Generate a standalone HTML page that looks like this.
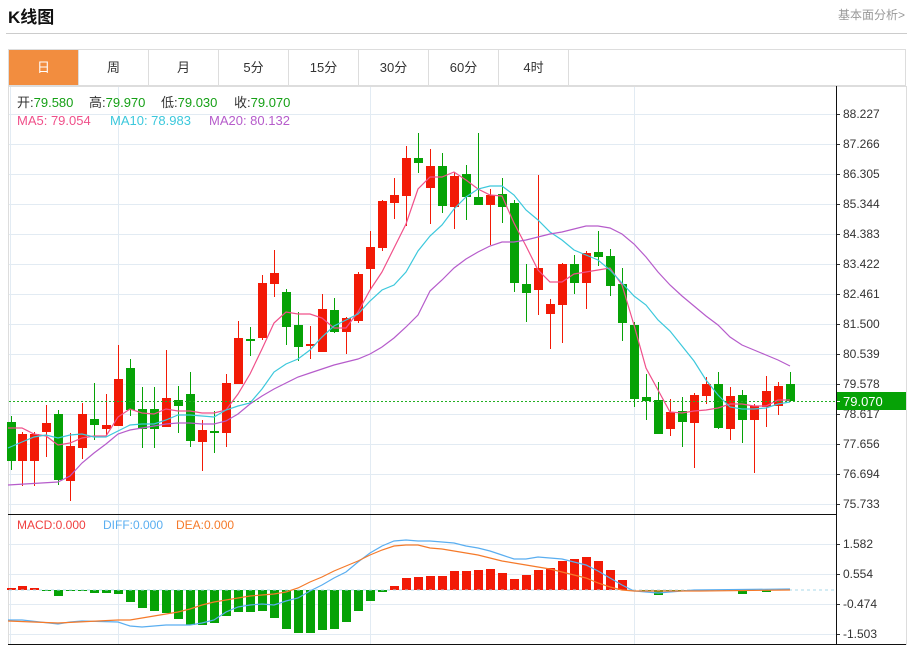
<!DOCTYPE html>
<html><head><meta charset="utf-8"><style>
*{margin:0;padding:0;box-sizing:border-box}
body{width:913px;height:645px;background:#fff;font-family:"Liberation Sans","Noto Sans CJK SC",sans-serif;overflow:hidden;position:relative}
.t{position:absolute;left:8px;top:3px;font-size:17px;font-weight:bold;color:#111}
.r{position:absolute;right:8px;top:6px;font-size:12px;color:#999}
.hl{position:absolute;left:6px;right:6px;top:33px;height:1px;background:#ccc}
.tabs{position:absolute;left:8px;top:49px;width:898px;height:37px;border:1px solid #ddd;display:flex}
.tabs div{width:70px;border-right:1px solid #ddd;text-align:center;line-height:35px;font-size:13px;color:#333}
.tabs div.a{background:#f28d3f;color:#fff}
svg{position:absolute;left:0;top:0}
</style></head><body>
<div class="t">K线图</div><div class="r">基本面分析&gt;</div><div class="hl"></div>
<div class="tabs"><div class="a">日</div><div>周</div><div>月</div><div>5分</div><div>15分</div><div>30分</div><div>60分</div><div>4时</div></div>
<svg id="s" width="913" height="645" style="top:0" xmlns="http://www.w3.org/2000/svg" font-family="Liberation Sans, Noto Sans CJK SC, sans-serif"></svg>
<script>
var s=document.getElementById('s'),h='';
h+='<rect x="8.5" y="86.5" width="898" height="558" fill="none" stroke="#ddd"/>';
var ys=[114,144,174,204,234,264,294,324,354,384,414,444,474,504],lb=['88.227','87.266','86.305','85.344','84.383','83.422','82.461','81.500','80.539','79.578','78.617','77.656','76.694','75.733'];
ys.forEach(function(y,i){h+='<line x1="9" x2="836" y1="'+(y+.5)+'" y2="'+(y+.5)+'" stroke="#e2ebf3"/><line x1="836" x2="840" y1="'+(y+.5)+'" y2="'+(y+.5)+'" stroke="#333"/><text x="843" y="'+(y+4)+'" font-size="12" fill="#333">'+lb[i]+'</text>'});
var my=[544,574,604,634],ml=['1.582','0.554','-0.474','-1.503'];
my.forEach(function(y,i){h+='<line x1="9" x2="836" y1="'+(y+.5)+'" y2="'+(y+.5)+'" stroke="#e2ebf3"/><line x1="836" x2="840" y1="'+(y+.5)+'" y2="'+(y+.5)+'" stroke="#333"/><text x="843" y="'+(y+4)+'" font-size="12" fill="#333">'+ml[i]+'</text>'});
[10.5,118.5,370.5,634.5].forEach(function(x){h+='<line x1="'+x+'" x2="'+x+'" y1="87" y2="644" stroke="#e2ebf3"/>'});
var C=[[11,422,461,416,470,'g'],[22,434,461,432,486,'r'],[34,434,461,432,486,'r'],[46,423,432,405,457,'r'],[58,414,480,410,485,'g'],[70,446,481,433,501,'r'],[82,414,448,403,459,'r'],[94,419,425,383,440,'g'],[106,425,429,394,435,'r'],[118,379,426,345,426,'r'],[130,368,410,359,416,'g'],[142,409,429,387,448,'g'],[154,409,429,387,448,'g'],[166,398,427,350,427,'r'],[178,400,406,386,433,'g'],[190,394,441,372,447,'g'],[202,430,442,420,471,'r'],[214,431,433,411,453,'g'],[226,383,433,374,447,'r'],[238,338,384,321,384,'r'],[250,339,341,327,356,'g'],[262,283,338,275,340,'r'],[274,273,284,250,297,'r'],[286,292,327,289,345,'g'],[298,325,347,312,361,'g'],[310,344,346,326,359,'r'],[322,309,352,294,352,'r'],[334,310,332,298,333,'g'],[346,318,332,317,354,'r'],[358,274,321,272,323,'r'],[370,247,269,231,290,'r'],[382,201,248,200,251,'r'],[394,195,203,178,219,'r'],[406,158,196,146,226,'r'],[418,158,163,133,173,'g'],[430,166,188,149,224,'r'],[442,166,206,153,213,'g'],[454,176,207,172,229,'r'],[466,174,197,165,220,'g'],[478,197,205,133,205,'g'],[490,195,205,189,245,'r'],[502,194,207,178,223,'g'],[514,203,283,200,292,'g'],[526,284,293,264,322,'g'],[538,268,290,175,315,'r'],[550,304,314,299,349,'r'],[562,264,305,263,343,'r'],[574,264,283,255,294,'g'],[586,253,283,251,309,'r'],[598,252,257,231,266,'g'],[610,256,286,249,296,'g'],[622,284,323,268,341,'g'],[634,325,399,322,407,'g'],[646,397,401,374,420,'g'],[658,400,434,382,434,'g'],[670,412,429,399,436,'r'],[682,411,422,397,447,'g'],[694,395,423,393,468,'r'],[706,384,396,377,404,'r'],[718,384,428,372,429,'g'],[730,396,429,387,440,'r'],[742,395,420,390,443,'g'],[754,406,420,404,473,'r'],[766,391,407,376,427,'r'],[778,386,406,382,415,'r'],[790,384,401,372,401,'g']];
C.forEach(function(c){var col=c[5]=='r'?'#f21a06':'#06a206';h+='<line x1="'+(c[0]+.5)+'" x2="'+(c[0]+.5)+'" y1="'+c[3]+'" y2="'+c[4]+'" stroke="'+col+'"/><rect x="'+(c[0]-4)+'" y="'+c[1]+'" width="9" height="'+Math.max(1,c[2]-c[1])+'" fill="'+col+'"/>'});
function pl(p,col){return '<polyline fill="none" stroke="'+col+'" stroke-width="1.2" points="'+p+'"/>'}
h+=pl('8,428 22,428 34,434 46,436 58,445 70,443 82,438 94,436 106,436 118,417 130,409 142,413 154,414 166,409 178,411 190,411 202,413 214,413 226,410 238,394 250,374 262,349 274,323 286,312 298,314 310,314 322,318 334,328 346,328 358,312 370,290 382,272 394,248 406,224 418,189 430,177 442,177 454,172 466,180 478,189 490,195 502,196 514,223 526,246 538,270 550,282 562,282 574,274 586,272 598,270 610,268 622,285 634,325 646,368 658,390 670,412 682,413 694,411 706,410 718,408 730,404 742,404 754,406 766,406 778,400 790,400','#f0508a');
h+=pl('8,448 22,442 34,437 46,435 58,438 70,435 82,434 94,437 106,437 118,431 130,425 142,424 154,424 166,420 178,415 190,415 202,416 214,417 226,410 238,406 250,403 262,389 274,372 286,364 298,359 310,350 322,337 334,326 346,320 358,314 370,301 382,290 394,285 406,272 418,251 430,236 442,225 454,209 466,197 478,189 490,186 502,186 514,195 526,210 538,220 550,232 562,240 574,250 586,255 598,260 610,270 622,283 634,296 646,305 658,320 670,331 682,346 694,361 706,380 718,395 730,407 742,409 754,409 766,408 778,404 790,402','#3cc8dc');
h+=pl('8,485 58,482 70,476 82,463 94,453 106,444 118,434 130,430 142,428 154,426 166,424 178,423 190,423 202,424 214,424 226,421 238,414 250,404 262,396 274,389 286,383 298,377 310,373 322,369 334,365 346,362 358,359 370,354 382,347 394,338 406,327 418,315 430,291 442,280 454,268 466,259 478,252 490,246 502,242 514,242 526,240 538,237 550,234 562,232 574,229 586,226 598,226 610,228 622,234 634,244 646,257 658,272 670,285 682,296 694,306 706,316 718,325 730,337 742,345 754,350 766,355 778,360 790,366','#b65ccb');
h+='<line x1="9" x2="836" y1="401.5" y2="401.5" stroke="#22b022" stroke-dasharray="2,2"/>';
h+='<rect x="837" y="392" width="69" height="18" fill="#06a206"/><text x="843" y="406" font-size="13" fill="#fff">79.070</text><line x1="836" x2="840" y1="401.5" y2="401.5" stroke="#fff"/>';
var M=[[11,588],[22,586],[34,588],[46,591],[58,596],[70,591],[82,590],[94,593],[106,593],[118,594],[130,602],[142,608],[154,611],[166,613],[178,619],[190,625],[202,625],[214,623],[226,616],[238,612],[250,612],[262,611],[274,618],[286,629],[298,633],[310,633],[322,630],[334,629],[346,622],[358,611],[370,601],[382,592],[394,586],[406,578],[418,577],[430,576],[442,576],[454,571],[466,571],[478,570],[490,569],[502,573],[514,579],[526,575],[538,570],[550,568],[562,561],[574,559],[586,557],[598,561],[610,570],[622,580],[646,591],[658,595],[670,591],[682,591],[742,594],[766,592]];
M.forEach(function(m){var z=590,col=m[1]<z?'#f21a06':'#06a206';h+='<rect x="'+(m[0]-4)+'" y="'+Math.min(z,m[1])+'" width="9" height="'+Math.max(1,Math.abs(m[1]-z))+'" fill="'+col+'"/>'});
h+='<line x1="9" x2="836" y1="590" y2="590" stroke="#a8d8e8" stroke-dasharray="3,3"/>';
h+=pl('8,620 22,620 58,624 70,622 82,621 118,622 130,626 142,627 166,625 190,625 202,623 214,620 226,612 238,607 250,605 262,604 274,605 286,601 298,598 310,591 322,585 334,578 346,572 358,562 370,553 382,546 394,541 406,540 418,541 430,541 442,542 454,543 466,546 478,548 490,551 502,555 514,559 526,559 538,557 550,558 562,559 574,562 586,565 598,571 610,578 622,585 634,591 646,592 658,593 670,592 682,591 694,590 790,589','#5aaef0');
h+=pl('8,621 58,623 118,620 130,620 142,618 154,616 166,614 178,612 190,609 202,605 214,602 226,600 238,598 250,596 262,595 274,594 286,592 298,588 310,582 322,577 334,571 346,566 358,561 370,555 382,550 394,546 406,545 418,545 430,548 442,549 454,551 466,553 478,555 490,558 502,561 514,563 526,565 538,567 550,569 562,572 574,575 586,578 598,583 610,587 622,590 634,591 700,591 790,590','#f57a2a');
h+='<line x1="8" x2="836" y1="514.5" y2="514.5" stroke="#111"/><line x1="836.5" x2="836.5" y1="86" y2="645" stroke="#111"/><line x1="8" x2="906" y1="644.5" y2="644.5" stroke="#111"/>';
var L=[[17,'开:','79.580'],[89,'高:','79.970'],[161,'低:','79.030'],[234,'收:','79.070']];
L.forEach(function(l){h+='<text x="'+l[0]+'" y="107" font-size="13" fill="#333">'+l[1]+'<tspan fill="#16a016">'+l[2]+'</tspan></text>'});
h+='<text x="17" y="125" font-size="13" fill="#f0508a">MA5: 79.054</text><text x="110" y="125" font-size="13" fill="#3cc8dc">MA10: 78.983</text><text x="209" y="125" font-size="13" fill="#b65ccb">MA20: 80.132</text>';
h+='<text x="17" y="529" font-size="12" fill="#f04040">MACD:0.000</text><text x="103" y="529" font-size="12" fill="#5aaef0">DIFF:0.000</text><text x="176" y="529" font-size="12" fill="#f57a2a">DEA:0.000</text>';
s.innerHTML=h;
</script>
</body></html>
